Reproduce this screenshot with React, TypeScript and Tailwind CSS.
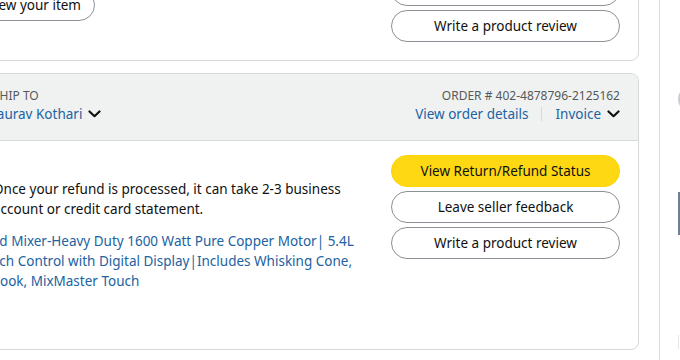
import type { ReactNode } from "react"

const Chevron = () => (
  <svg width="13" height="8" viewBox="0 0 13 8" className="shrink-0">
    <path d="M1.5 1.5 6.5 6.2l5-4.7" fill="none" stroke="#0f1111" strokeWidth="2.2" strokeLinecap="round" strokeLinejoin="round" />
  </svg>
)

function Pill({ children, primary }: { children: ReactNode; primary?: boolean }) {
  return (
    <button
      className={
        primary
          ? "h-[32px] w-full rounded-full bg-[#ffd814] border border-[#fcd200] text-[13.5px] text-[#0f1111] whitespace-nowrap"
          : "h-[32px] w-full rounded-full bg-white border border-[#8d9096] text-[13.5px] text-[#0f1111] whitespace-nowrap"
      }
    >
      {children}
    </button>
  )
}

export default function App() {
  return (
    <div className="w-[680px] h-[360px] overflow-hidden bg-white flex font-['Noto_Sans',sans-serif] text-[#0f1111]">
      <div className="-ml-[26px] w-[665px] shrink-0 flex flex-col">
        {/* carta anterior, solo se ve el final */}
        <div className="-mt-[40px] rounded-lg border border-[#d5d9d9] flex justify-between px-[18px] pt-[13px] pb-[18px]">
          <div className="w-[102px] flex justify-end mt-[15px]">
            <button className="h-[32px] shrink-0 rounded-full bg-white border border-[#8d9096] px-[13px] text-[13.5px] whitespace-nowrap">
              View your item
            </button>
          </div>
          <div className="w-[229px] flex flex-col gap-[4px]">
            <Pill>Leave seller feedback</Pill>
            <Pill>Write a product review</Pill>
          </div>
        </div>

        {/* pedido 402-4878796-2125162 */}
        <div className="mt-[12px] rounded-lg border border-[#d5d9d9] overflow-hidden">
          <div className="bg-[#f0f2f2] border-b border-[#d5d9d9] px-[18px] pt-[14px] pb-[16px] flex justify-between">
            <div>
              <div className="h-[16px] leading-[16px] text-[12px] text-[#565959] uppercase">Ship to</div>
              <div className="-ml-[6px] h-[20px] leading-[20px] text-[13.5px] text-[#2162a1] flex items-center gap-[6px]">
                Gaurav Kothari <Chevron />
              </div>
            </div>
            <div className="flex flex-col items-end">
              <div className="h-[16px] leading-[16px] text-[12px] text-[#565959] uppercase">Order # 402-4878796-2125162</div>
              <div className="h-[20px] leading-[20px] text-[13.5px] flex items-center">
                <span className="text-[#2162a1]">View order details</span>
                <span className="mx-[13px] w-px h-[14px] bg-[#d5d9d9]" />
                <span className="text-[#2162a1]">Invoice</span>
                <span className="ml-[6px]"><Chevron /></span>
              </div>
            </div>
          </div>
          <div className="h-[208px] px-[18px] pt-[14px] flex justify-between">
            <div className="text-[13.5px] leading-[20px] whitespace-nowrap">
              <div className="mt-[24px]">
                <div>Once your refund is processed, it can take 2-3 business</div>
                <div>account or credit card statement.</div>
              </div>
              <div className="mt-[12px] text-[#2162a1]">
                <div className="-ml-[2px]">nd Mixer-Heavy Duty 1600 Watt Pure Copper Motor| 5.4L</div>
                <div className="-ml-[2px]">uch Control with Digital Display|Includes Whisking Cone,</div>
                <div className="-ml-[3px]">Hook, MixMaster Touch</div>
              </div>
            </div>
            <div className="w-[229px] shrink-0 flex flex-col gap-[4px]">
              <Pill primary>View Return/Refund Status</Pill>
              <Pill>Leave seller feedback</Pill>
              <Pill>Write a product review</Pill>
            </div>
          </div>
        </div>
      </div>

      <div className="ml-[20px] w-px shrink-0 bg-[#dddddd]" />

      {/* columna derecha, apenas asoma */}
      <div className="ml-[18px] shrink-0 flex flex-col">
        <div className="mt-[86px] w-[26px] h-[26px] rounded-full border-2 border-[#c9cccc]" />
        <div className="mt-[80px] w-[24px] h-[43px] border-l-2 border-[#6f7f92]" />
        <div className="mt-[100px] w-[20px] h-[14px] border-l border-[#e3e6e6]" />
      </div>
    </div>
  )
}
